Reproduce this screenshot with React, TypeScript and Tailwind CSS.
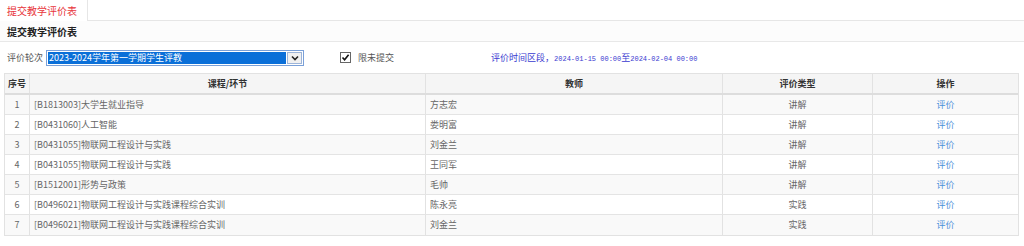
const rows = [
  { no: 1, course: '[B1813003]大学生就业指导', teacher: '方志宏', type: '讲解' },
  { no: 2, course: '[B0431060]人工智能', teacher: '娄明富', type: '讲解' },
  { no: 3, course: '[B0431055]物联网工程设计与实践', teacher: '刘金兰', type: '讲解' },
  { no: 4, course: '[B0431055]物联网工程设计与实践', teacher: '王同军', type: '讲解' },
  { no: 5, course: '[B1512001]形势与政策', teacher: '毛帅', type: '讲解' },
  { no: 6, course: '[B0496021]物联网工程设计与实践课程综合实训', teacher: '陈永亮', type: '实践' },
  { no: 7, course: '[B0496021]物联网工程设计与实践课程综合实训', teacher: '刘金兰', type: '实践' },
]

export default function App() {
  return (
    <div className="w-[1024px] h-[246px] overflow-hidden bg-white text-[#333] font-['Noto_Sans_CJK_SC',sans-serif]">
      {/* Tabs */}
      <div className="flex h-[21px] border-b border-[#e6e6e6]">
        <div className="relative -mb-px h-[21px] w-[88px] bg-white border-r border-[#e6e6e6] flex items-center pl-[7px] text-[10px] text-[#e8343b]">
          提交教学评价表
        </div>
      </div>

      {/* Title */}
      <div className="h-[21px] bg-[#fcfcfc] border-b border-[#e8e8e8] flex items-center pl-[7px] text-[10px] font-bold text-[#222]">
        提交教学评价表
      </div>

      {/* Filter */}
      <div className="h-[31px] flex items-center pl-[7px] text-[9px] text-[#555]">
        <span className="w-[39px]">评价轮次</span>
        <div className="w-[258px] h-[16px] border border-[#7aa0d8] bg-white flex items-stretch p-px">
          <div className="flex-1 bg-[#0a6fd8] text-white flex items-center pl-[1px] text-[9px]">2023-2024学年第一学期学生评教</div>
          <div className="w-[15px] ml-px bg-[#f0f0f0] border border-[#9db4d8] flex items-center justify-center">
            <svg width="8" height="6" viewBox="0 0 8 6"><path d="M1 1.5 L4 4.5 L7 1.5" fill="none" stroke="#222" strokeWidth="1.6" /></svg>
          </div>
        </div>
        <div className="ml-[36px] w-[11px] h-[11px] border border-[#666] bg-white flex items-center justify-center">
          <svg width="9" height="9" viewBox="0 0 9 9"><path d="M1.5 4.5 L3.6 6.8 L7.6 1.8" fill="none" stroke="#111" strokeWidth="1.6" /></svg>
        </div>
        <span className="ml-[7px]">限未提交</span>
        <span className="ml-[97px] text-[9px] text-[#3a3ad0]">
          评价时间区段，<span className="font-['Liberation_Mono',monospace] text-[7px]">2024-01-15 00:00</span>至<span className="font-['Liberation_Mono',monospace] text-[7px]">2024-02-04 00:00</span>
        </span>
      </div>

      {/* Table */}
      <div className="ml-[4px] w-[1015px] border border-[#e2e2e2] text-[9px] text-[#666]">
        <div className="grid grid-cols-[25px_396px_297px_150px_1fr] h-[21px] bg-[#f5f5f5] border-b-2 border-[#dddddd] font-bold text-[#333]">
          <div className="flex items-center justify-center border-r border-[#e2e2e2]">序号</div>
          <div className="flex items-center justify-center border-r border-[#e2e2e2]">课程/环节</div>
          <div className="flex items-center justify-center border-r border-[#e2e2e2]">教师</div>
          <div className="flex items-center justify-center border-r border-[#e2e2e2]">评价类型</div>
          <div className="flex items-center justify-center">操作</div>
        </div>
        {rows.map((r, i) => (
          <div
            key={r.no}
            className={`grid grid-cols-[25px_396px_297px_150px_1fr] h-[20px] ${i < rows.length - 1 ? 'border-b border-[#e4e4e4]' : ''} ${i % 2 === 0 ? 'bg-[#f9f9f9]' : 'bg-white'}`}
          >
            <div className="flex items-center justify-center border-r border-[#e2e2e2]">{r.no}</div>
            <div className="flex items-center pl-[4px] border-r border-[#e2e2e2]">{r.course}</div>
            <div className="flex items-center pl-[4px] border-r border-[#e2e2e2]">{r.teacher}</div>
            <div className="flex items-center justify-center border-r border-[#e2e2e2]">{r.type}</div>
            <div className="flex items-center justify-center text-[#4a90d9]">评价</div>
          </div>
        ))}
      </div>
    </div>
  )
}
